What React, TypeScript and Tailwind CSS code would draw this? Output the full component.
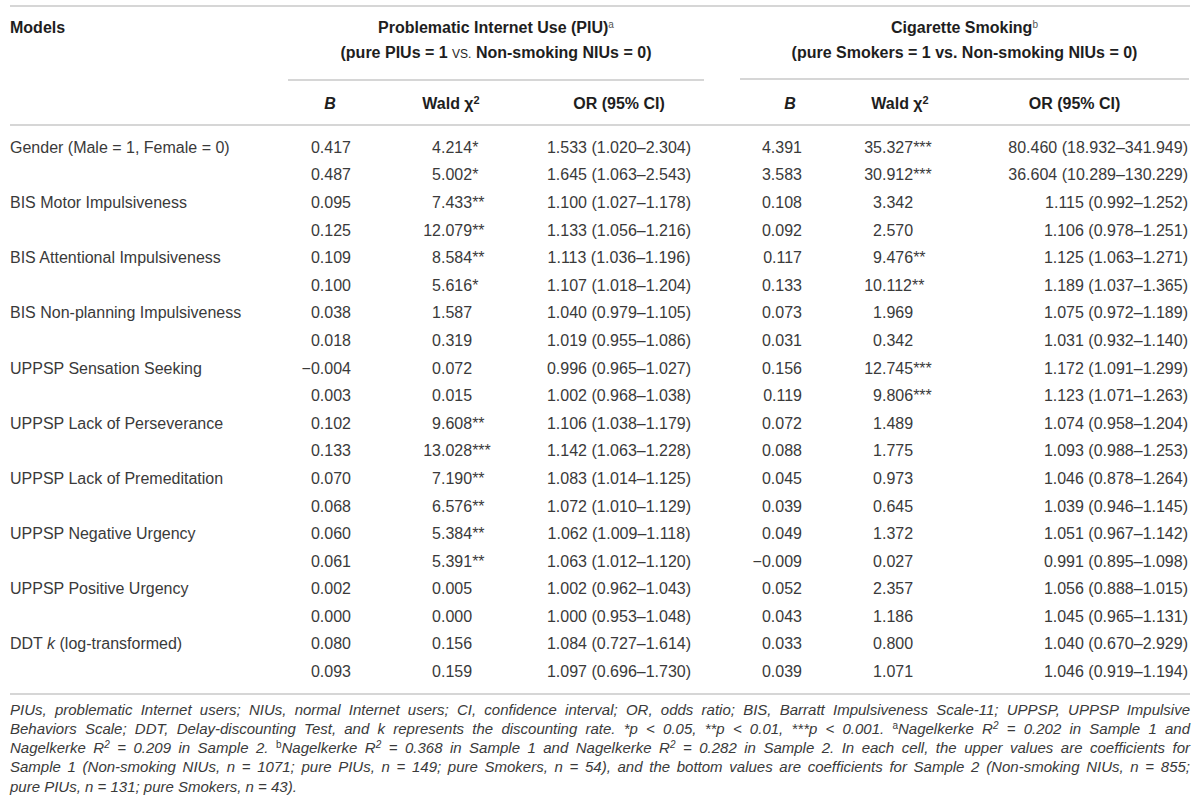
import React from "react";

type Row = [string, string, string, string, string, string];

const data: { label: React.ReactNode; a: Row; b: Row }[] = [
  { label: "Gender (Male = 1, Female = 0)", a: ["0.417", "4.214*", "1.533 (1.020–2.304)", "4.391", "35.327***", "80.460 (18.932–341.949)"], b: ["0.487", "5.002*", "1.645 (1.063–2.543)", "3.583", "30.912***", "36.604 (10.289–130.229)"] },
  { label: "BIS Motor Impulsiveness", a: ["0.095", "7.433**", "1.100 (1.027–1.178)", "0.108", "3.342", "1.115 (0.992–1.252)"], b: ["0.125", "12.079**", "1.133 (1.056–1.216)", "0.092", "2.570", "1.106 (0.978–1.251)"] },
  { label: "BIS Attentional Impulsiveness", a: ["0.109", "8.584**", "1.113 (1.036–1.196)", "0.117", "9.476**", "1.125 (1.063–1.271)"], b: ["0.100", "5.616*", "1.107 (1.018–1.204)", "0.133", "10.112**", "1.189 (1.037–1.365)"] },
  { label: "BIS Non-planning Impulsiveness", a: ["0.038", "1.587", "1.040 (0.979–1.105)", "0.073", "1.969", "1.075 (0.972–1.189)"], b: ["0.018", "0.319", "1.019 (0.955–1.086)", "0.031", "0.342", "1.031 (0.932–1.140)"] },
  { label: "UPPSP Sensation Seeking", a: ["−0.004", "0.072", "0.996 (0.965–1.027)", "0.156", "12.745***", "1.172 (1.091–1.299)"], b: ["0.003", "0.015", "1.002 (0.968–1.038)", "0.119", "9.806***", "1.123 (1.071–1.263)"] },
  { label: "UPPSP Lack of Perseverance", a: ["0.102", "9.608**", "1.106 (1.038–1.179)", "0.072", "1.489", "1.074 (0.958–1.204)"], b: ["0.133", "13.028***", "1.142 (1.063–1.228)", "0.088", "1.775", "1.093 (0.988–1.253)"] },
  { label: "UPPSP Lack of Premeditation", a: ["0.070", "7.190**", "1.083 (1.014–1.125)", "0.045", "0.973", "1.046 (0.878–1.264)"], b: ["0.068", "6.576**", "1.072 (1.010–1.129)", "0.039", "0.645", "1.039 (0.946–1.145)"] },
  { label: "UPPSP Negative Urgency", a: ["0.060", "5.384**", "1.062 (1.009–1.118)", "0.049", "1.372", "1.051 (0.967–1.142)"], b: ["0.061", "5.391**", "1.063 (1.012–1.120)", "−0.009", "0.027", "0.991 (0.895–1.098)"] },
  { label: "UPPSP Positive Urgency", a: ["0.002", "0.005", "1.002 (0.962–1.043)", "0.052", "2.357", "1.056 (0.888–1.015)"], b: ["0.000", "0.000", "1.000 (0.953–1.048)", "0.043", "1.186", "1.045 (0.965–1.131)"] },
  { label: <>DDT <i>k</i> (log-transformed)</>, a: ["0.080", "0.156", "1.084 (0.727–1.614)", "0.033", "0.800", "1.040 (0.670–2.929)"], b: ["0.093", "0.159", "1.097 (0.696–1.730)", "0.039", "1.071", "1.046 (0.919–1.194)"] },
];

const GRID = "grid grid-cols-[278px_84px_158px_178px_32px_100px_120px_229px]";

function Wald({ v, pl }: { v: string; pl: string }) {
  const i = v.indexOf(".");
  return (
    <div className={pl}>
      <span className="inline-block w-[20px] text-right">{v.slice(0, i)}</span>
      <span>{v.slice(i)}</span>
    </div>
  );
}

function DataRow({ label, r }: { label: React.ReactNode; r: Row }) {
  return (
    <div className={`${GRID} h-[27.6px] items-center`}>
      <div>{label}</div>
      <div className="text-right pr-[21px]">{r[0]}</div>
      <Wald v={r[1]} pl="pl-[49px]" />
      <div className="text-center">{r[2]}</div>
      <div />
      <div className="text-right pr-[38px]">{r[3]}</div>
      <Wald v={r[4]} pl="pl-[22px]" />
      <div className="text-right pr-[1px]">{r[5]}</div>
    </div>
  );
}

function R2() {
  return (
    <>
      <i>R</i>
      <sup className="text-[10px]">2</sup>
    </>
  );
}

export default function App() {
  return (
    <div
      className="w-[1200px] h-[811px] bg-white pt-[5px] px-[10px] text-[#3a3a3a]"
      style={{ fontFamily: '"Liberation Sans", Arial, Helvetica, sans-serif' }}
    >
      <div className="border-t-2 border-[#d6d6d6]" />
      {/* group header */}
      <div className={`${GRID} text-[16px] font-bold text-[#1e1e1e] leading-[20px]`}>
        <div className="pt-[11px]">Models</div>
        <div className="col-span-3 pt-[11px] pr-[4px]">
          <div className="text-center">
            Problematic Internet Use (PIU)
            <sup className="font-normal text-[10px] text-[#555]">a</sup>
          </div>
          <div className="text-center mt-[5px]">
            (pure PIUs = 1 <span className="font-normal text-[12px] uppercase">vs.</span> Non-smoking NIUs = 0)
          </div>
          <div className="border-b-2 border-[#d6d6d6] mt-[15px]" />
        </div>
        <div />
        <div className="col-span-3 pt-[11px]">
          <div className="text-center">
            Cigarette Smoking
            <sup className="font-normal text-[10px] text-[#555]">b</sup>
          </div>
          <div className="text-center mt-[5px]">(pure Smokers = 1 vs. Non-smoking NIUs = 0)</div>
          <div className="border-b-2 border-[#d6d6d6] mt-[15px]" />
        </div>
      </div>
      {/* sub header */}
      <div className={`${GRID} text-[16px] font-bold text-[#1e1e1e] leading-[20px] pt-[13px] pb-[10px] border-b-2 border-[#d6d6d6]`}>
        <div />
        <div className="text-center italic">B</div>
        <div className="text-center">
          Wald χ<sup className="text-[11px]">2</sup>
        </div>
        <div className="text-center">OR (95% CI)</div>
        <div />
        <div className="text-center italic">B</div>
        <div className="text-center">
          Wald χ<sup className="text-[11px]">2</sup>
        </div>
        <div className="text-center">OR (95% CI)</div>
      </div>
      {/* body */}
      <div className="text-[16px] pt-[8px] pb-[7px] border-b-2 border-[#d6d6d6]">
        {data.map((d, i) => (
          <React.Fragment key={i}>
            <DataRow label={d.label} r={d.a} />
            <DataRow label="" r={d.b} />
          </React.Fragment>
        ))}
      </div>
      {/* footnote */}
      <div className="mt-[5px] text-[15px] italic leading-[19.2px] text-[#3a3a3a]">
        <div className="text-justify [text-align-last:justify]">
          PIUs, problematic Internet users; NIUs, normal Internet users; CI, confidence interval; OR, odds ratio; BIS, Barratt Impulsiveness Scale-11; UPPSP, UPPSP Impulsive
        </div>
        <div className="text-justify [text-align-last:justify]">
          Behaviors Scale; DDT, Delay-discounting Test, and k represents the discounting rate. *<i>p</i> &lt; 0.05, **<i>p</i> &lt; 0.01, ***<i>p</i> &lt; 0.001.{" "}
          <sup className="text-[10px] not-italic">a</sup>Nagelkerke <R2 /> = 0.202 in Sample 1 and
        </div>
        <div className="text-justify [text-align-last:justify]">
          Nagelkerke <R2 /> = 0.209 in Sample 2. <sup className="text-[10px] not-italic">b</sup>Nagelkerke <R2 /> = 0.368 in Sample 1 and Nagelkerke <R2 /> = 0.282 in Sample 2. In each cell, the upper values are coefficients for
        </div>
        <div className="text-justify [text-align-last:justify]">
          Sample 1 (Non-smoking NIUs, <i>n</i> = 1071; pure PIUs, <i>n</i> = 149; pure Smokers, <i>n</i> = 54), and the bottom values are coefficients for Sample 2 (Non-smoking NIUs, <i>n</i> = 855;
        </div>
        <div>
          pure PIUs, <i>n</i> = 131; pure Smokers, <i>n</i> = 43).
        </div>
      </div>
    </div>
  );
}
